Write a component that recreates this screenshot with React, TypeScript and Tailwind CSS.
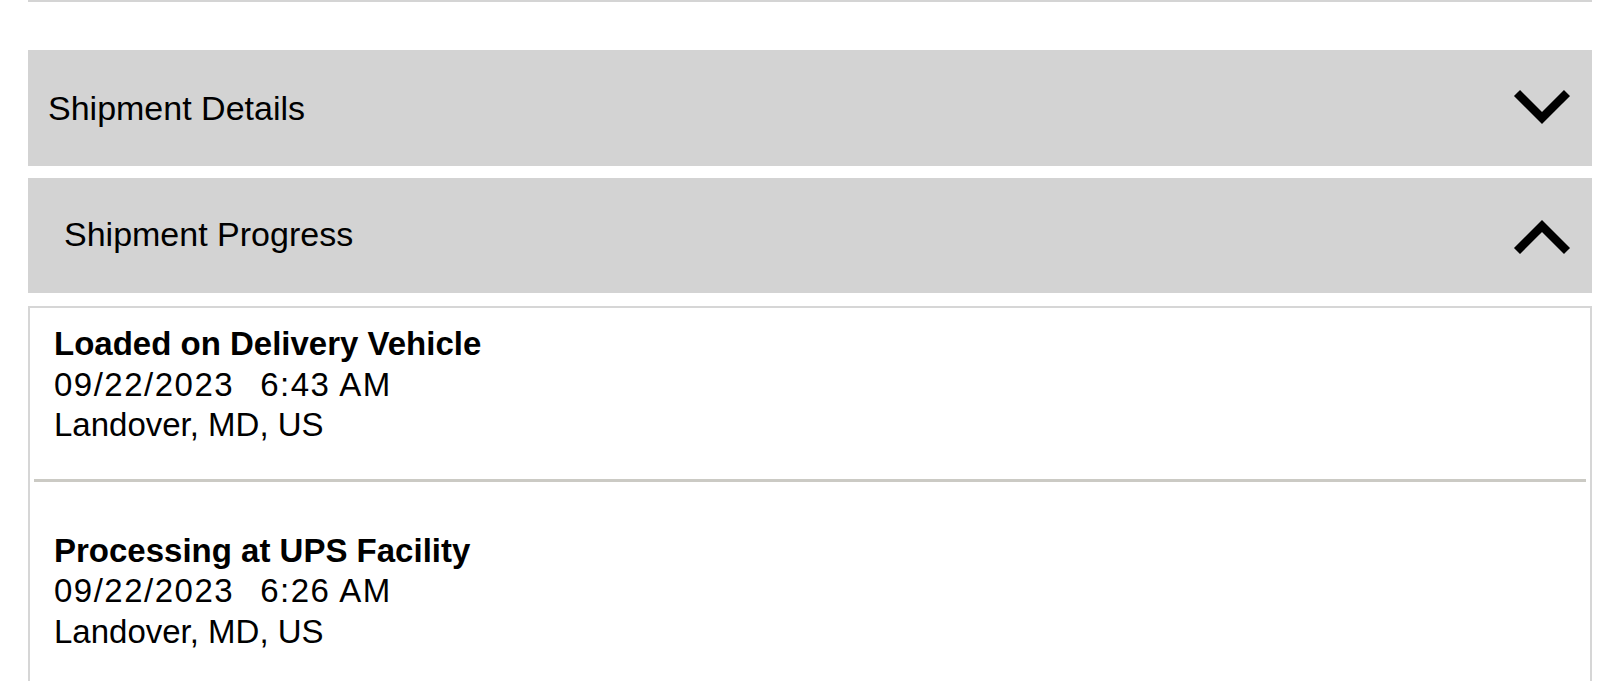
import React from 'react';

type ProgressEvent = {
  status: string;
  date: string;
  time: string;
  location: string;
};

const events: ProgressEvent[] = [
  { status: 'Loaded on Delivery Vehicle', date: '09/22/2023', time: '6:43 AM', location: 'Landover, MD, US' },
  { status: 'Processing at UPS Facility', date: '09/22/2023', time: '6:26 AM', location: 'Landover, MD, US' },
];

function Chevron({ up }: { up?: boolean }) {
  return (
    <svg width="58" height="38" viewBox="0 0 58 38" fill="none" className="shrink-0">
      <polyline
        points={up ? '4,34 29,9 54,34' : '4,4 29,29 54,4'}
        stroke="#000"
        strokeWidth="8.5"
        strokeLinecap="butt"
        strokeLinejoin="miter"
      />
    </svg>
  );
}

export default function App() {
  return (
    <div
      className="bg-white min-h-screen text-black"
      style={{ fontFamily: '"Liberation Sans", Arial, sans-serif' }}
    >
      <div className="ml-[28px] w-[1564px]">
        {/* divider from previous section */}
        <div className="h-[2px] bg-[#d4d4d4]" />

        {/* Shipment Details (collapsed) */}
        <div className="mt-[48px] h-[116px] bg-[#d3d3d3] flex items-center justify-between pl-[20px] pr-[21px]">
          <span className="text-[34px] leading-[40px] mb-[1px]">Shipment Details</span>
          <Chevron />
        </div>

        {/* Shipment Progress (expanded) */}
        <div className="mt-[12px] h-[115px] bg-[#d3d3d3] flex items-center justify-between pl-[36px] pr-[21px]">
          <span className="text-[34px] leading-[40px] mb-[4px]">Shipment Progress</span>
          <Chevron up />
        </div>

        <div className="mt-[13px] border-2 border-[#d6d6d6] bg-white">
          {events.map((ev, i) => (
            <div key={i}>
              {i > 0 && <div className="mx-[4px] h-[3px] bg-[#cbcac4]" />}
              <div
                className={
                  i === 0
                    ? 'pl-[24px] pt-[16px] pb-[33px] text-[33px] leading-[40.5px]'
                    : 'pl-[24px] pt-[49px] pb-[35px] text-[33px] leading-[40.5px]'
                }
              >
                <div className="font-bold">{ev.status}</div>
                <div className="whitespace-pre tracking-[1.5px]">
                  <span>{ev.date}</span>
                  <span className="ml-[26px]">{ev.time}</span>
                </div>
                <div>{ev.location}</div>
              </div>
            </div>
          ))}
        </div>
      </div>
    </div>
  );
}
